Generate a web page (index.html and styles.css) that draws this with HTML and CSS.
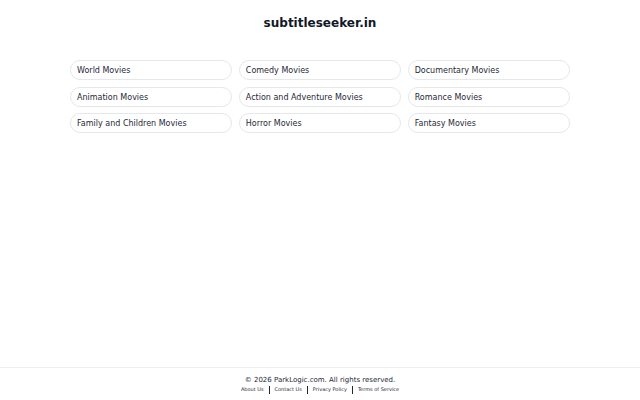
FILE: index.html
```html
<!DOCTYPE html>
<html>
<head>
<meta charset="utf-8">
<link rel="stylesheet" href="styles.css">
</head>
<body>
<div class="page">
  <main class="main">
    <h1 class="title">subtitleseeker.in</h1>
    <div class="grid">
      <a class="pill" href="#">World Movies</a>
      <a class="pill" href="#">Comedy Movies</a>
      <a class="pill" href="#">Documentary Movies</a>
      <a class="pill" href="#">Animation Movies</a>
      <a class="pill" href="#">Action and Adventure Movies</a>
      <a class="pill" href="#">Romance Movies</a>
      <a class="pill" href="#">Family and Children Movies</a>
      <a class="pill" href="#">Horror Movies</a>
      <a class="pill" href="#">Fantasy Movies</a>
    </div>
  </main>
  <footer class="footer">
    <div class="copy">© 2026 ParkLogic.com. All rights reserved.</div>
    <div class="links">
      <a href="#">About Us</a><span class="sep"></span>
      <a href="#">Contact Us</a><span class="sep"></span>
      <a href="#">Privacy Policy</a><span class="sep"></span>
      <a href="#">Terms of Service</a>
    </div>
  </footer>
</div>
</body>
</html>
```
FILE: styles.css
```css
html, body {
  margin: 0;
  padding: 0;
  background: #ffffff;
  font-family: "DejaVu Sans", sans-serif;
  color: #1f2937;
}
.page {
  min-height: 400px;
  display: flex;
  flex-direction: column;
}
.main {
  flex: 1;
  display: flex;
  flex-direction: column;
  align-items: center;
}
.title {
  margin: 16px 0 0;
  font-size: 12px;
  font-weight: bold;
  color: #111827;
  line-height: 15px;
}
.grid {
  margin-top: 29px;
  width: 500px;
  display: grid;
  grid-template-columns: repeat(3, 1fr);
  gap: 6.5px 6.5px;
}
.pill {
  display: block;
  height: 20px;
  line-height: 20px;
  border: 1px solid #e5e7eb;
  border-radius: 11px;
  padding: 0 6px;
  font-size: 8px;
  color: #1f2937;
  text-decoration: none;
  box-sizing: border-box;
}
.footer {
  border-top: 1px solid #eeeeee;
  padding: 7px 0 6px;
  text-align: center;
}
.copy {
  font-size: 7px;
  line-height: 10px;
  color: #1f2937;
}
.links {
  display: flex;
  justify-content: center;
  align-items: center;
  font-size: 5px;
  line-height: 9px;
}
.links a {
  color: #1f2937;
  text-decoration: none;
  padding: 0 5px;
}
.sep {
  display: inline-block;
  width: 1px;
  height: 8px;
  background: #1f2937;
}
```
